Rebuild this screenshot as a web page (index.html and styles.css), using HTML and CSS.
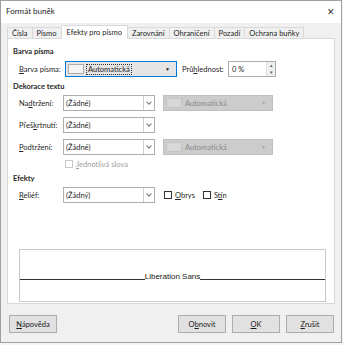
FILE: index.html
```html
<!DOCTYPE html>
<html lang="cs">
<head>
  <meta charset="UTF-8">
  <title>Formát buněk</title>
  <link rel="stylesheet" href="styles.css">
</head>
<body>
  <div class="dialog">
    <div class="titlebar">
      <span class="title">Formát buněk</span>
      <span class="close">✕</span>
    </div>

    <div class="dialog-body">
      <div class="tabs">
        <div class="tab">Čísla</div>
        <div class="tab">Písmo</div>
        <div class="tab active">Efekty pro písmo</div>
        <div class="tab">Zarovnání</div>
        <div class="tab">Ohraničení</div>
        <div class="tab">Pozadí</div>
        <div class="tab">Ochrana buňky</div>
      </div>

      <div class="panel">
        <div class="heading first">Barva písma</div>
        <div class="row row-color">
          <span class="label"><u>B</u>arva písma:</span>
          <div class="listbox focused">
            <span class="swatch"></span>
            <span class="focus-text">Automatická</span>
            <span class="arrow">▼</span>
          </div>
          <span class="label-inline">Prů<u>h</u>lednost:</span>
          <div class="spin">
            <span>0 %</span>
            <div class="spin-btns">
              <span>▴</span>
              <span>▾</span>
            </div>
          </div>
        </div>

        <div class="heading">Dekorace textu</div>
        <div class="row">
          <span class="label">Na<u>d</u>tržení:</span>
          <div class="select"><span>(Žádné)</span><span class="chev"></span></div>
          <div class="listbox disabled">
            <span class="swatch"></span>
            <span>Automatická</span>
            <span class="arrow">▼</span>
          </div>
        </div>
        <div class="row">
          <span class="label">Přeš<u>k</u>rtnutí:</span>
          <div class="select"><span>(Žádné)</span><span class="chev"></span></div>
        </div>
        <div class="row">
          <span class="label"><u>P</u>odtržení:</span>
          <div class="select"><span>(Žádné)</span><span class="chev"></span></div>
          <div class="listbox disabled">
            <span class="swatch"></span>
            <span>Automatická</span>
            <span class="arrow">▼</span>
          </div>
        </div>
        <div class="check-row disabled-text">
          <span class="checkbox"></span><span><u>J</u>ednotlivá slova</span>
        </div>

        <div class="heading">Efekty</div>
        <div class="row">
          <span class="label"><u>R</u>eliéf:</span>
          <div class="select"><span>(Žádný)</span><span class="chev"></span></div>
          <span class="checkbox"></span><span class="check-label"><u>O</u>brys</span>
          <span class="checkbox"></span><span class="check-label">S<u>t</u>ín</span>
        </div>

        <div class="preview">
          <div class="preview-line">
            <span class="rule"></span>
            <span class="preview-text">Liberation Sans</span>
            <span class="rule"></span>
          </div>
        </div>
      </div>

      <div class="buttons">
        <button><u>N</u>ápověda</button>
        <span class="spacer"></span>
        <button>O<u>b</u>novit</button>
        <button><u>O</u>K</button>
        <button><u>Z</u>rušit</button>
      </div>
    </div>
  </div>
</body>
</html>
```

FILE: styles.css
```css
* {
  margin: 0;
  padding: 0;
  box-sizing: border-box;
}

body {
  font-family: 'Lato', 'Liberation Sans', sans-serif;
  font-size: 7.5px;
  color: #262626;
  background-color: #f5f5f5;
}

u {
  text-decoration-thickness: 1px;
  text-underline-offset: 1px;
}

.dialog {
  width: 342px;
  height: 343px;
  background-color: #f0f0f0;
  border: 1px solid #a0a0a0;
  display: flex;
  flex-direction: column;
}

.titlebar {
  height: 22px;
  background-color: #ffffff;
  display: flex;
  align-items: center;
  justify-content: space-between;
  padding: 0 6px 2px 5px;
}

.title {
  font-size: 8px;
}

.close {
  font-size: 9px;
  color: #333;
}

.dialog-body {
  flex: 1;
  padding: 3px 6px 0 6px;
  display: flex;
  flex-direction: column;
}

.tabs {
  display: flex;
  height: 13px;
  align-items: flex-end;
  margin-bottom: -1px;
}

.tab {
  height: 12px;
  padding: 0 4px;
  border: 1px solid #d9d9d9;
  border-bottom: none;
  border-left: none;
  background-color: #f0f0f0;
  display: flex;
  align-items: center;
  font-size: 7.5px;
}

.tab:first-child {
  border-left: 1px solid #d9d9d9;
}

.tab.active {
  height: 14px;
  background-color: #ffffff;
  position: relative;
  z-index: 1;
  padding: 0 5px;
}

.panel {
  height: 266px;
  background-color: #ffffff;
  border: 1px solid #d9d9d9;
  padding: 7px 10px 0 5px;
  display: flex;
  flex-direction: column;
}

.heading {
  font-weight: bold;
  height: 11px;
  line-height: 11px;
  margin-bottom: 3px;
}

.heading.first {
  margin-bottom: 4px;
}

.row {
  display: flex;
  align-items: center;
  height: 16px;
  padding-left: 6px;
  margin-bottom: 6px;
}

.row.row-color {
  margin-bottom: 4px;
}

.label {
  width: 44px;
  flex-shrink: 0;
}

.label-inline {
  margin-left: 5px;
  width: 46px;
}

.listbox {
  height: 16px;
  display: flex;
  align-items: center;
  padding: 0 6px 0 2px;
  border: 1px solid #adadad;
}

.listbox.focused {
  width: 112px;
  margin-left: 2px;
  border-color: #0078d7;
  background-color: #e5e5e5;
}

.listbox.disabled {
  width: 110px;
  margin-left: 8px;
  background-color: #cccccc;
  border-color: #bfbfbf;
  color: #8a8a8a;
}

.swatch {
  width: 16px;
  height: 10px;
  border: 1px solid #adadad;
  background-color: #f4f4f4;
  margin-right: 3px;
}

.listbox.disabled .swatch {
  background-color: #d8d8d8;
  border-color: #c4c4c4;
}

.focus-text {
  outline: 1px dotted #333;
  padding: 0 1px;
}

.arrow {
  margin-left: auto;
  font-size: 5px;
}

.listbox.disabled .arrow {
  color: #a5a5a5;
}

.spin {
  width: 48px;
  height: 16px;
  border: 1px solid #adadad;
  background-color: #ffffff;
  display: flex;
  align-items: center;
  padding-left: 3px;
}

.spin span:first-child {
  flex: 1;
}

.spin-btns {
  width: 9px;
  height: 14px;
  display: flex;
  flex-direction: column;
  background-color: #f0f0f0;
  border-left: 1px solid #e0e0e0;
  font-size: 5px;
  color: #555;
  text-align: center;
  line-height: 7px;
}

.select {
  width: 92px;
  height: 16px;
  border: 1px solid #adadad;
  display: flex;
  align-items: center;
  padding-left: 2px;
}

.select span:first-child {
  flex: 1;
}

.chev {
  width: 11px;
  height: 14px;
  border-left: 1px solid #d0d0d0;
  position: relative;
}

.chev::after {
  content: "";
  position: absolute;
  left: 3px;
  top: 4px;
  width: 3px;
  height: 3px;
  border-right: 1px solid #7a7a7a;
  border-bottom: 1px solid #7a7a7a;
  transform: rotate(45deg);
}

.check-row {
  display: flex;
  align-items: center;
  height: 10px;
  padding-left: 52px;
  margin-top: -2px;
  margin-bottom: 4px;
}

.checkbox {
  width: 8px;
  height: 8px;
  border: 1px solid #333;
  background-color: #fff;
  margin-right: 3px;
}

.row .checkbox {
  margin-left: 9px;
}

.row .checkbox + .check-label + .checkbox {
  margin-left: 8px;
}

.disabled-text {
  color: #a0a0a0;
}

.disabled-text .checkbox {
  border-color: #c8c8c8;
}

.preview {
  margin: 40px 0 0 6px;
  width: 307px;
  height: 53px;
  border: 1px solid #c8c8c8;
  display: flex;
  align-items: center;
}

.preview-line {
  width: 100%;
  display: flex;
  align-items: flex-end;
  margin-top: 2px;
}

.rule {
  flex: 1;
  border-bottom: 1px solid #333;
  margin-bottom: 1px;
}

.preview-text {
  font-family: 'Liberation Sans', sans-serif;
  font-size: 8px;
  color: #222;
  line-height: 9px;
}

.buttons {
  display: flex;
  gap: 6px;
  margin-top: 11px;
  padding: 0 1px 0 2px;
}

.spacer {
  flex: 1;
}

button {
  width: 48px;
  height: 18px;
  font-family: inherit;
  font-size: 7.5px;
  background-color: #e1e1e1;
  border: 1px solid #adadad;
  color: #1a1a1a;
}
```
